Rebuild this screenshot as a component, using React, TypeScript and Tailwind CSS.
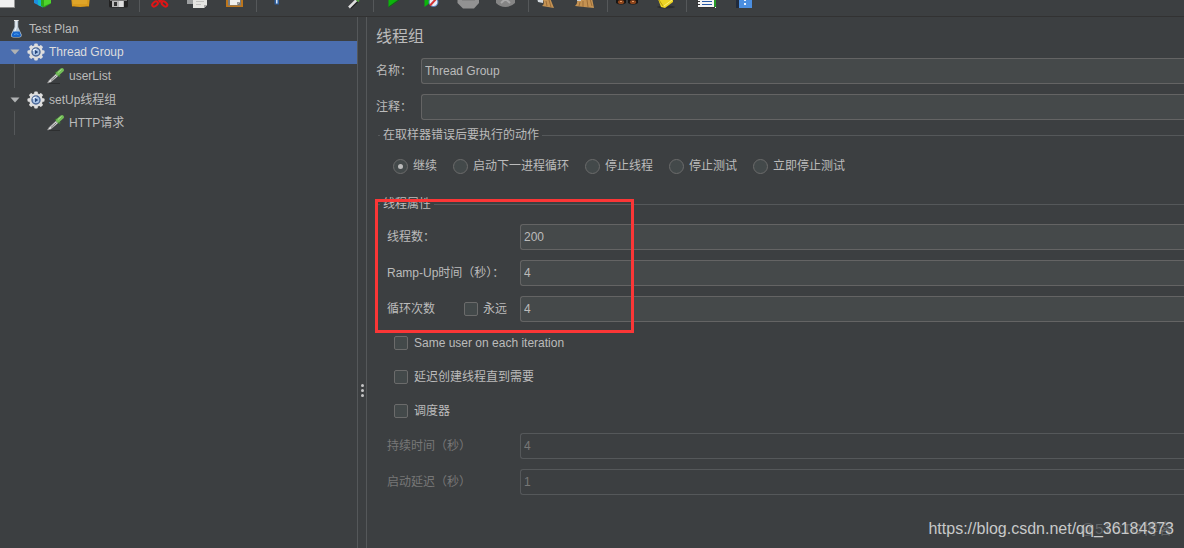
import React from "react";

const field =
  "h-[26px] min-w-0 flex-1 rounded-l-[3px] border border-r-0 border-[#646464] bg-[#45494a] pl-[3px] text-[12px] text-[#bbbbbb] outline-none disabled:border-[#55585a] disabled:bg-[#3c3f41] disabled:text-[#777777]";
const checkbox =
  "h-[14px] w-[14px] shrink-0 appearance-none rounded-[2px] border border-[#6b6b6b] bg-[#43494a] checked:bg-[#4b6eaf]";

function Tool({ label, children }: { label: string; children: React.ReactNode }) {
  return (
    <button type="button" aria-label={label} className="h-4 w-[38px] shrink-0">
      <svg width="38" height="16" viewBox="0 0 38 16" className="block">
        {children}
      </svg>
    </button>
  );
}

function Separator() {
  return (
    <span className="flex h-3 w-[3px] shrink-0 justify-center">
      <span className="w-px bg-[#55585a]" />
    </span>
  );
}

function Toolbar() {
  return (
    <header className="h-[17px] overflow-hidden border-b border-[#323232]">
      <div className="-ml-[14px] flex h-4">
        <Tool label="New">
          <path d="M12 -4H28.500V7H12Z" fill="#f0f0f0" />
          <path d="M12 7H29V8H12Z" fill="#8c8c8c" />
        </Tool>
        <Tool label="Templates">
          <path d="M10 -2L16 0V6L10 3Z" fill="#1d8fe0" />
          <path d="M14 -2L19 1V7.500L14 5Z" fill="#14b8c8" />
          <path d="M17 0H27V3.500L20 7.500L17 6Z" fill="#2fa81a" />
          <path d="M20 -1L27 -2V3L20 6Z" fill="#4ed42b" />
        </Tool>
        <Tool label="Open">
          <path d="M9 -4H28L27 6Q18 8 10 6Z" fill="#d99b1d" />
          <path d="M10 -2H25V4H11Z" fill="#dfa529" />
          <path d="M10 6Q18 8 27 6V7H10Z" fill="#8f6519" />
        </Tool>
        <Tool label="Save">
          <path d="M9 -3H28V6Q28 7.500 26 7.500H11Q9 7.500 9 6Z" fill="#222" />
          <path d="M12 1H24V7H12Z" fill="#b8b8b8" />
          <path d="M14 2H17V6H14Z" fill="#333" />
          <path d="M19 1H23V7H19Z" fill="#ddd" />
          <path d="M10 -1H27V1H10Z" fill="#777" />
        </Tool>
        <Separator />
        <Tool label="Cut">
          <g fill="none" stroke="#e01515" strokeWidth="2">
            <path d="M16 -2L20 2M23 -2L18 2" />
            <ellipse cx="14" cy="4" rx="3.200" ry="2" transform="rotate(-38 14 4)" />
            <ellipse cx="23.500" cy="4" rx="3.200" ry="2" transform="rotate(38 23.500 4)" />
          </g>
        </Tool>
        <Tool label="Copy">
          <path d="M8 -4H18V4H8Z" fill="#9d9fa0" />
          <path d="M14 -2H28V5L25 8H14Z" fill="#e5e5e2" />
          <path d="M17 1.500H25M17 4.500H22" stroke="#c2c2c0" />
          <path d="M25 8V5H28Z" fill="#a8a8a8" />
        </Tool>
        <Tool label="Paste">
          <path d="M9 -3H26V7H9Z" fill="#bd761c" />
          <path d="M11 -3H24V5.500H11Z" fill="#777c80" />
          <path d="M13 -3H23V2L20 5H13Z" fill="#f0f0ee" />
          <path d="M20 5V2H23Z" fill="#999" />
        </Tool>
        <Separator />
        <Tool label="Expand all">
          <path d="M16.500 -2H21V4.500H16.500Z" fill="#2e5f9f" />
          <path d="M18 -2H19.500V3.500H18Z" fill="#d6e6f7" />
        </Tool>
        <Tool label="Collapse all">{null}</Tool>
        <Tool label="Toggle">
          <path d="M16 7.500L24 0" stroke="#202020" strokeWidth="3.500" />
          <path d="M15 7.500L22.500 0" stroke="#dedede" strokeWidth="2.500" />
          <path d="M22 -1L25 1.500" stroke="#4d9a3b" strokeWidth="2" />
        </Tool>
        <Separator />
        <Tool label="Start">
          <path d="M13.500 -8L24 -1L13.500 7Z" fill="#0bb50b" />
          <path d="M13.500 7L24 0" stroke="#08740c" />
        </Tool>
        <Tool label="Start no pauses">
          <path d="M11.500 -8L22 -1L11.500 7Z" fill="#0bb50b" />
          <circle cx="20.500" cy="2" r="4.500" fill="#e8eef8" stroke="#4c77b9" />
          <path d="M17 5.500L24 -2" stroke="#d33232" strokeWidth="2" />
        </Tool>
        <Tool label="Stop">
          <path d="M6.500 -3H28V3L23 8.500H12L6.500 3Z" fill="#929292" />
          <path d="M11 0H24" stroke="#777" />
        </Tool>
        <Tool label="Shutdown">
          <path d="M7 -3H26V3Q22 7 16.500 7Q11 7 7 3Z" fill="#858585" />
          <path d="M12 3L16.500 -1L21 3" fill="none" stroke="#a8a8a8" strokeWidth="2" />
        </Tool>
        <Separator />
        <Tool label="Clear">
          <path d="M7 -2L13 0V3L8 2Z" fill="#d5dbe0" />
          <path d="M13 0L20 -2L24 8L12 6Q15 4 13 0Z" fill="#c49252" />
          <path d="M16 1L17 6M19 0L21 7" stroke="#9a6c38" />
        </Tool>
        <Tool label="Clear all">
          <path d="M9 -1L24 -2L26 8L16 7L7 6Q10 4 9 -1Z" fill="#c49252" />
          <path d="M12 2L11 6M15 1V7M19 0L20 7M22 -1L24 6" stroke="#9a6c38" />
          <path d="M9 -1H13V1H9Z" fill="#cdd0d2" />
        </Tool>
        <Separator />
        <Tool label="Search">
          <path d="M7 -3H17V3Q12 6 7 3ZM19 -3H29V3Q24 6 19 3Z" fill="#171514" />
          <ellipse cx="12" cy="2" rx="3.200" ry="2" fill="#8c451c" />
          <ellipse cx="24" cy="2" rx="3.200" ry="2" fill="#8c451c" />
          <path d="M11 1.500H13M23 1.500H25" stroke="#e59a62" />
        </Tool>
        <Tool label="Reset search">
          <ellipse cx="19" cy="7" rx="9" ry="1.500" fill="#2c2e30" />
          <path d="M11 -1L26 -3L26 2L18 8L14 7Z" fill="#edd424" />
          <path d="M17 6L25 0" stroke="#fff176" />
          <path d="M12 0L16 6" stroke="#b79b0d" />
        </Tool>
        <Separator />
        <Tool label="Function helper">
          <path d="M10 -3H28V8H10Z" fill="#f4f4f4" />
          <path d="M26 0H28V7H26Z" fill="#269a27" />
          <path d="M14 1.500H24M14 4.500H24" stroke="#2959a5" />
          <path d="M9 1.500H12M9 4.500H12M10 7.500H27" stroke="#333" />
        </Tool>
        <Tool label="Help">
          <path d="M10 -3H13V8H10Z" fill="#202a3b" />
          <path d="M13 -3H26V8H13Z" fill="#4b8edf" />
          <path d="M18 -2H20V1H18ZM18 3H20V5H18Z" fill="#e9f3ff" />
        </Tool>
      </div>
    </header>
  );
}

function Flask() {
  return (
    <svg width="14" height="20" viewBox="0 0 14 20" className="shrink-0">
      <path d="M5.500 1.500H9.200V8L12.600 15.500Q13 18.500 10 18.500H4.500Q1.500 18.500 2 15.500L5.500 8Z" fill="#b9c7d2" />
      <path d="M6.500 2H7.700V9L6 13H4.800L6.500 8.500Z" fill="#f2f6fa" />
      <path d="M4.300 12.500H10.600L12 16Q12.300 18 10 18H4.500Q2.200 18 2.500 16Z" fill="#1766cc" />
      <path d="M5 15.500Q7.300 14 9.500 15.500" fill="none" stroke="#4ea0f5" />
      <path d="M5 1.500H9.700" stroke="#e8e8e8" />
    </svg>
  );
}

function Gear() {
  return (
    <svg width="18" height="18" viewBox="0 0 18 18" className="shrink-0">
      <g fill="#dedede">
        <rect x="7.200" y="0.500" width="3.600" height="17" rx="1" />
        <rect x="7.200" y="0.500" width="3.600" height="17" rx="1" transform="rotate(45 9 9)" />
        <rect x="7.200" y="0.500" width="3.600" height="17" rx="1" transform="rotate(90 9 9)" />
        <rect x="7.200" y="0.500" width="3.600" height="17" rx="1" transform="rotate(135 9 9)" />
        <circle cx="9" cy="9" r="6.800" />
      </g>
      <circle cx="9" cy="9" r="4" fill="#a9c3e6" stroke="#4a6796" strokeWidth="1.400" />
      <path d="M6 8Q7 5.800 9.500 6" fill="none" stroke="#f4f8ff" strokeWidth="1.200" />
      <path d="M8 7L11.300 9L8 11.200Z" fill="#25457a" />
    </svg>
  );
}

function Dropper() {
  return (
    <svg width="20" height="18" viewBox="0 0 20 18" className="shrink-0">
      <path d="M3 16.500H14" stroke="#2d2f30" />
      <path d="M1.500 16L3 13.500L10.500 6.500L12.500 8.500L5 15Z" fill="#e4e4e4" stroke="#8a8a8a" strokeWidth="0.600" />
      <path d="M5 13.500L10.500 8.500" stroke="#6b6b6b" />
      <path d="M9.500 5L14 9.500" stroke="#3a7a30" strokeWidth="2" />
      <path d="M12 6.500L16 3" stroke="#72bd57" strokeWidth="4" strokeLinecap="round" />
      <path d="M12 5.500L15.500 2.500" stroke="#a9e08c" />
    </svg>
  );
}

function Arrow() {
  return (
    <svg width="10" height="6" viewBox="0 0 10 6" className="shrink-0">
      <path d="M0.500 0.500H9.500L5 5.500Z" fill="#b0b2b3" />
    </svg>
  );
}

function Branch({ name, selected }: { name: string; selected?: boolean }) {
  return (
    <li className={selected ? "flex items-center bg-[#4b6eaf] pl-[10px] text-[#dddddd]" : "flex items-center pl-[10px]"}>
      <Arrow />
      <span className="ml-[7px] flex items-center gap-1">
        <Gear />
        {name}
      </span>
    </li>
  );
}

function Leaf({ name }: { name: string }) {
  return (
    <li className="flex pl-[14px]">
      <span className="w-px bg-[#55585a]" />
      <span className="ml-[31px] flex items-center gap-[3px]">
        <Dropper />
        {name}
      </span>
    </li>
  );
}

function TextRow({ id, label, value, disabled }: { id: string; label: string; value: string; disabled?: boolean }) {
  return (
    <div className="flex items-center">
      <label htmlFor={id} className={disabled ? "w-[133px] shrink-0 text-[#777777]" : "w-[133px] shrink-0"}>
        {label}
      </label>
      <input id={id} type="text" defaultValue={value} disabled={disabled} className={field} />
    </div>
  );
}

const actions = ["继续", "启动下一进程循环", "停止线程", "停止测试", "立即停止测试"];
const options = ["Same user on each iteration", "延迟创建线程直到需要", "调度器"];

export default function App() {
  return (
    <div className="relative flex min-h-screen flex-col overflow-hidden bg-[#3c3f41] font-['Liberation_Sans','Noto_Sans_CJK_SC',sans-serif] text-[12px] leading-4 text-[#bbbbbb]">
      <Toolbar />
      <div className="flex flex-1">
        <nav className="w-[357px] shrink-0">
          <ul className="grid h-[118px] grid-rows-5">
            <li className="flex items-center gap-[6px] pl-[9px]">
              <Flask />
              Test Plan
            </li>
            <Branch name="Thread Group" selected />
            <Leaf name="userList" />
            <Branch name="setUp线程组" />
            <Leaf name="HTTP请求" />
          </ul>
        </nav>
        <div className="flex w-[10px] shrink-0 flex-col items-center gap-[2px] border-x border-[#55585a] pt-[367px]">
          <span className="h-[3px] w-[3px] rounded-full bg-[#c4c4c4]" />
          <span className="h-[3px] w-[3px] rounded-full bg-[#c4c4c4]" />
          <span className="h-[3px] w-[3px] rounded-full bg-[#c4c4c4]" />
        </div>
        <main className="min-w-0 flex-1 pt-2 pl-[9px]">
          <h1 className="mb-[9px] text-[16px] leading-6">线程组</h1>
          <div className="flex flex-col gap-[10px]">
            <div className="flex items-center">
              <label htmlFor="name" className="w-[45px] shrink-0">名称：</label>
              <input id="name" type="text" defaultValue="Thread Group" className={field} />
            </div>
            <div className="flex items-center">
              <label htmlFor="comment" className="w-[45px] shrink-0">注释：</label>
              <input id="comment" type="text" className={field} />
            </div>
          </div>

          <fieldset className="mt-[7px] ml-[2px] border-t border-[#55585a]">
            <legend className="ml-[2px] px-[3px]">在取样器错误后要执行的动作</legend>
            <div className="flex h-[46px] items-center gap-4 pl-[15px]">
              {actions.map((action, i) => (
                <label key={action} className="flex shrink-0 items-center gap-[5px]">
                  <input
                    type="radio"
                    name="on-error"
                    defaultChecked={i === 0}
                    className="flex h-[15px] w-[15px] appearance-none items-center justify-center rounded-full border border-[#6b6b6b] bg-[#43494a] before:h-[5px] before:w-[5px] before:rounded-full checked:before:bg-[#bbbbbb]"
                  />
                  {action}
                </label>
              ))}
            </div>
          </fieldset>

          <div className="relative mt-[7px] ml-[2px]">
            <fieldset className="border-t border-[#55585a]">
              <legend className="ml-[2px] px-[3px]">线程属性</legend>
              <div className="pt-3 pl-[9px]">
                <div className="flex flex-col gap-[10px]">
                  <TextRow id="threads" label="线程数：" value="200" />
                  <TextRow id="ramp-up" label="Ramp-Up时间（秒）：" value="4" />
                  <div className="flex items-center">
                    <label htmlFor="loops" className="w-[77px] shrink-0">循环次数</label>
                    <label className="flex w-[56px] shrink-0 items-center gap-[5px]">
                      <input type="checkbox" className={checkbox} />
                      永远
                    </label>
                    <input id="loops" type="text" defaultValue="4" className={field} />
                  </div>
                </div>
                <div className="mt-1 mb-[5px] pl-[7px]">
                  {options.map((option) => (
                    <div key={option} className="flex h-[34px] items-center">
                      <label className="flex items-center gap-[6px]">
                        <input type="checkbox" className={checkbox} />
                        {option}
                      </label>
                    </div>
                  ))}
                </div>
                <div className="flex flex-col gap-[10px]">
                  <TextRow id="duration" label="持续时间（秒）" value="4" disabled />
                  <TextRow id="delay" label="启动延迟（秒）" value="1" disabled />
                </div>
              </div>
            </fieldset>
            <div className="pointer-events-none absolute top-[3px] -left-[3px] h-[134px] w-[259px] border-3 border-[#fb3636]" />
          </div>
        </main>
      </div>
      <span className="absolute right-[11px] bottom-[9px] text-[15px] leading-5 text-[#626567]">@51CTO博客</span>
      <span className="absolute right-[10px] bottom-[9px] text-[16px] leading-5 text-[#c8c9c9]">
        https://blog.csdn.net/qq_36184373
      </span>
    </div>
  );
}
